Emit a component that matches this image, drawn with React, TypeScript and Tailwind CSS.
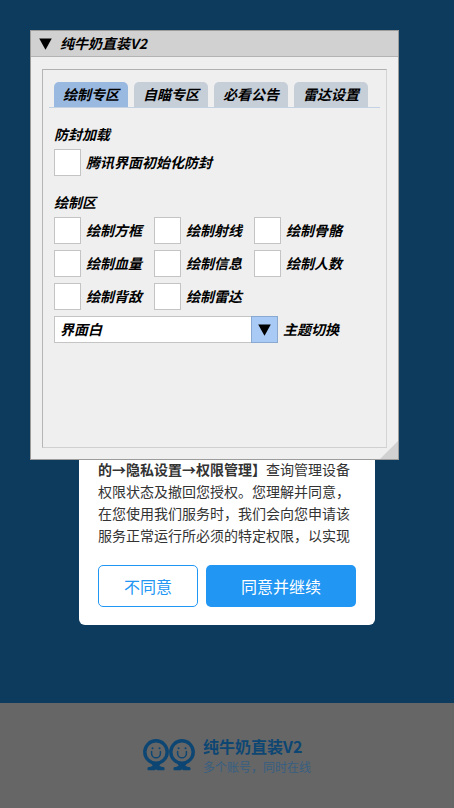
import { useState } from 'react';
import clsx from 'clsx';

const tabs = ['绘制专区', '自瞄专区', '必看公告', '雷达设置'];

const drawOptions = [
  '绘制方框',
  '绘制射线',
  '绘制骨骼',
  '绘制血量',
  '绘制信息',
  '绘制人数',
  '绘制背敌',
  '绘制雷达',
];

const themes = ['界面白', '界面黑'];

function Triangle() {
  return (
    <svg viewBox="0 0 13 12" className="w-[13px] h-3" aria-hidden="true">
      <path d="M0.2 0.5H12.8L6.5 11.8Z" fill="#000" />
    </svg>
  );
}

function CheckOption({ label }: { label: string }) {
  return (
    <label className="flex items-center gap-[5px]">
      <input
        type="checkbox"
        className="appearance-none size-[27px] shrink-0 bg-white border border-[#c4c4c4] checked:bg-[#a9caf5]"
      />
      <span className="whitespace-nowrap">{label}</span>
    </label>
  );
}

function Face({ x }: { x: number }) {
  return (
    <g transform={`translate(${x} 0)`}>
      <circle cx="13" cy="13" r="11.2" strokeWidth="3.4" />
      <path d="M8.6 12.4v2a4.4 4.4 0 0 0 8.800 0v-2" strokeWidth="1.500" />
      <path d="M9.500 9.300h0.100M16.500 9.300h0.100" strokeWidth="2" />
      {/* Crossed feet under the head */}
      <path
        d="M9 24.500H17L15.500 27C17 28 19 28.800 20.800 29V30.600H14.800L13 29.600L11.200 30.600H5.200V29C7 28.800 9 28 10.500 27Z"
        fill="currentColor"
        strokeWidth="1.400"
        strokeLinejoin="round"
      />
    </g>
  );
}

function Logo() {
  return (
    <svg
      viewBox="0 0 52 33"
      className="w-[52px] h-[33px] text-[#0d4673]"
      fill="none"
      stroke="currentColor"
      strokeLinecap="round"
      aria-hidden="true"
    >
      <Face x={0} />
      <Face x={26} />
    </svg>
  );
}

function MenuWindow() {
  const [activeTab, setActiveTab] = useState(tabs[0]);
  const [theme, setTheme] = useState(themes[0]);

  return (
    <section className="absolute top-[30px] left-[30px] right-[55px] min-h-[430px] flex flex-col bg-[#efefef] border border-[#9c9c9c] text-sm leading-[21px] font-bold italic text-black">
      <header className="flex items-center gap-2 h-[26px] px-2 bg-[#d1d1d1] border-b border-[#b3b3b3]">
        <button type="button" aria-label="折叠">
          <Triangle />
        </button>
        <h1>纯牛奶直装V2</h1>
      </header>

      <div className="flex-1 flex flex-col px-[11px] pt-3 pb-[11px]">
        <div className="flex-1 px-[6px] pt-3 border border-t-[#b0b0b0] border-l-[#b5b5b5] border-r-[#d4d4d4] border-b-[#d0d0d0]">
          <div role="tablist" className="flex gap-[6px] px-[5px] border-b border-[#c3d2e3]">
            {tabs.map((tab) => (
              <button
                key={tab}
                type="button"
                role="tab"
                aria-selected={tab === activeTab}
                onClick={() => setActiveTab(tab)}
                className={clsx(
                  'h-[25px] px-[9px] rounded-t-[5px] whitespace-nowrap',
                  tab === activeTab ? 'bg-[#99b9e1]' : 'bg-[#c6ced8]'
                )}
              >
                {tab}
              </button>
            ))}
          </div>

          <div className="flex flex-col gap-4 px-[5px] pt-4">
            <div className="flex flex-col gap-1">
              <h2>防封加载</h2>
              <CheckOption label="腾讯界面初始化防封" />
            </div>

            <div className="flex flex-col gap-1">
              <h2>绘制区</h2>
              <div className="flex flex-col gap-[6px]">
                <div className="grid grid-cols-[repeat(3,max-content)] gap-x-3 gap-y-[6px]">
                  {drawOptions.map((option) => (
                    <CheckOption key={option} label={option} />
                  ))}
                </div>

                <div className="flex items-center gap-[5px]">
                  <div className="relative w-56">
                    <select
                      id="theme"
                      value={theme}
                      onChange={(e) => setTheme(e.target.value)}
                      className="appearance-none block w-full h-[27px] pl-[5px] bg-white border border-[#c4c4c4]"
                    >
                      {themes.map((name) => (
                        <option key={name}>{name}</option>
                      ))}
                    </select>
                    <span className="absolute right-0 inset-y-0 w-[27px] flex items-center justify-center bg-[#a9caf5] border border-[#8aa9d0] pointer-events-none">
                      <Triangle />
                    </span>
                  </div>
                  <label htmlFor="theme" className="whitespace-nowrap">
                    主题切换
                  </label>
                </div>
              </div>
            </div>
          </div>
        </div>
      </div>

      {/* Resize grip */}
      <svg viewBox="0 0 18 18" className="absolute right-0 bottom-0 size-[18px]" aria-hidden="true">
        <path d="M18 0V18H0Z" fill="#d1d1d1" />
      </svg>
    </section>
  );
}

function ConsentDialog() {
  return (
    <section className="w-full max-w-[296px] px-[19px] py-[18px] rounded-md bg-white">
      <p className="text-sm leading-[22px] text-[#333333]">
        <strong className="font-bold">的→隐私设置→权限管理】</strong>
        查询管理设备权限状态及撤回您授权。您理解并同意，在您使用我们服务时，我们会向您申请该服务正常运行所必须的特定权限，以实现
      </p>
      <div className="grid grid-cols-[2fr_3fr] gap-2 mt-[19px] text-base">
        <button
          type="button"
          className="h-[42px] rounded-[5px] border border-[#2196f3] text-[#2196f3]"
        >
          不同意
        </button>
        <button type="button" className="h-[42px] rounded-[5px] bg-[#2196f3] text-white">
          同意并继续
        </button>
      </div>
    </section>
  );
}

export default function App() {
  return (
    <div className="relative min-h-screen flex flex-col bg-[#0d3b5e] font-['Noto_Sans_CJK_SC',sans-serif]">
      <main className="flex-1 flex flex-col items-center justify-end px-4 pt-[420px] pb-[78px]">
        <ConsentDialog />
      </main>

      <footer className="flex items-center justify-center gap-2 pt-[31px] pb-8 bg-[#666666]">
        <Logo />
        <div>
          <p className="text-base leading-6 font-bold text-[#0d4673]">纯牛奶直装V2</p>
          <p className="text-xs leading-[18px] text-[#365f82]">多个账号，同时在线</p>
        </div>
      </footer>

      <MenuWindow />
    </div>
  );
}
